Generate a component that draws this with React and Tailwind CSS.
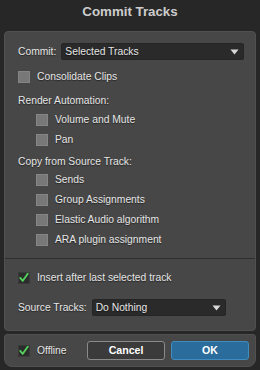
import React from "react";

const txt = "text-[10.3px] text-[#e6e6e6] [text-shadow:0_1px_1px_rgba(0,0,0,0.5)]";

function Box({ checked }) {
  if (checked) {
    return (
      <span className="w-[12px] h-[12px] bg-[#2c2c2c] border border-[#3a3a3a] flex items-center justify-center shrink-0">
        <svg width="12" height="11" viewBox="0 0 12 11" className="-mt-[1px]">
          <path d="M1.5 6 L4.5 9.5 L10.5 1" fill="none" stroke="#53d45c" strokeWidth="2.2" strokeLinecap="round" strokeLinejoin="round" />
        </svg>
      </span>
    );
  }
  return <span className="w-[12px] h-[12px] bg-[#787878] border border-[#858585] shrink-0" />;
}

function Check({ label, checked, indent }) {
  return (
    <div className={`flex items-center gap-[7px] h-[20px] ${indent ? "pl-[18px]" : ""}`}>
      <Box checked={checked} />
      <span className={txt}>{label}</span>
    </div>
  );
}

function Select({ value, w }) {
  return (
    <div className={`${w} h-[17px] bg-[#2a2a2a] rounded-[2px] border border-[#252525] flex items-center justify-between pl-[3px] pr-[4px]`}>
      <span className={txt}>{value}</span>
      <svg width="9" height="6" viewBox="0 0 9 6">
        <path d="M0.5 0.5 H8.5 L4.5 5.5 Z" fill="#d8d8d8" />
      </svg>
    </div>
  );
}

export default function App() {
  return (
    <div className="w-[260px] h-[370px] bg-[#272727] px-[4px] flex flex-col font-['Liberation_Sans',Arial,sans-serif] overflow-hidden">
      <div className="h-[31px] flex items-start justify-center pt-[3px] text-[13.3px] font-bold text-[#cdcdcd] leading-[18px]">
        Commit Tracks
      </div>

      <div className="bg-[#474747] rounded-[4px] border border-[#505050] pt-[11px] pb-[14px] flex flex-col">
        <div className="flex items-center h-[17px] pl-[13px] gap-[5px]">
          <span className={txt}>Commit:</span>
          <Select value="Selected Tracks" w="w-[183px]" />
        </div>

        <div className="pl-[13px] mt-[7px] flex flex-col">
          <Check label="Consolidate Clips" />
          <div className={`${txt} h-[19px] flex items-center mt-[4px]`}>Render Automation:</div>
          <Check label="Volume and Mute" indent />
          <Check label="Pan" indent />
          <div className={`${txt} h-[16px] flex items-center mt-[4px]`}>Copy from Source Track:</div>
          <Check label="Sends" indent />
          <Check label="Group Assignments" indent />
          <Check label="Elastic Audio algorithm" indent />
          <Check label="ARA plugin assignment" indent />
        </div>

        <div className="h-[1px] bg-[#2f2f2f] mt-[8px]" />

        <div className="pl-[13px] mt-[9px]">
          <Check label="Insert after last selected track" checked />
        </div>

        <div className="flex items-center h-[17px] pl-[13px] gap-[5px] mt-[11px]">
          <span className={txt}>Source Tracks:</span>
          <Select value="Do Nothing" w="w-[134px]" />
        </div>
      </div>

      <div className="mt-[3px] bg-[#474747] rounded-t-[3px] rounded-b-[8px] border border-[#505050] h-[33px] flex items-center pl-[13px] pr-[6px]">
        <div className="flex items-center gap-[7px] w-[69px]">
          <Box checked />
          <span className={txt}>Offline</span>
        </div>
        <button className="w-[78px] h-[19px] rounded-[3px] border border-[#8a8a8a] bg-[#3b3b3b] text-[10.6px] font-bold text-white flex items-center justify-center">
          Cancel
        </button>
        <button className="ml-[6px] w-[78px] h-[19px] rounded-[3px] border border-[#3f8cc0] bg-[#2a6c9c] text-[10.6px] font-bold text-white flex items-center justify-center">
          OK
        </button>
      </div>
    </div>
  );
}
